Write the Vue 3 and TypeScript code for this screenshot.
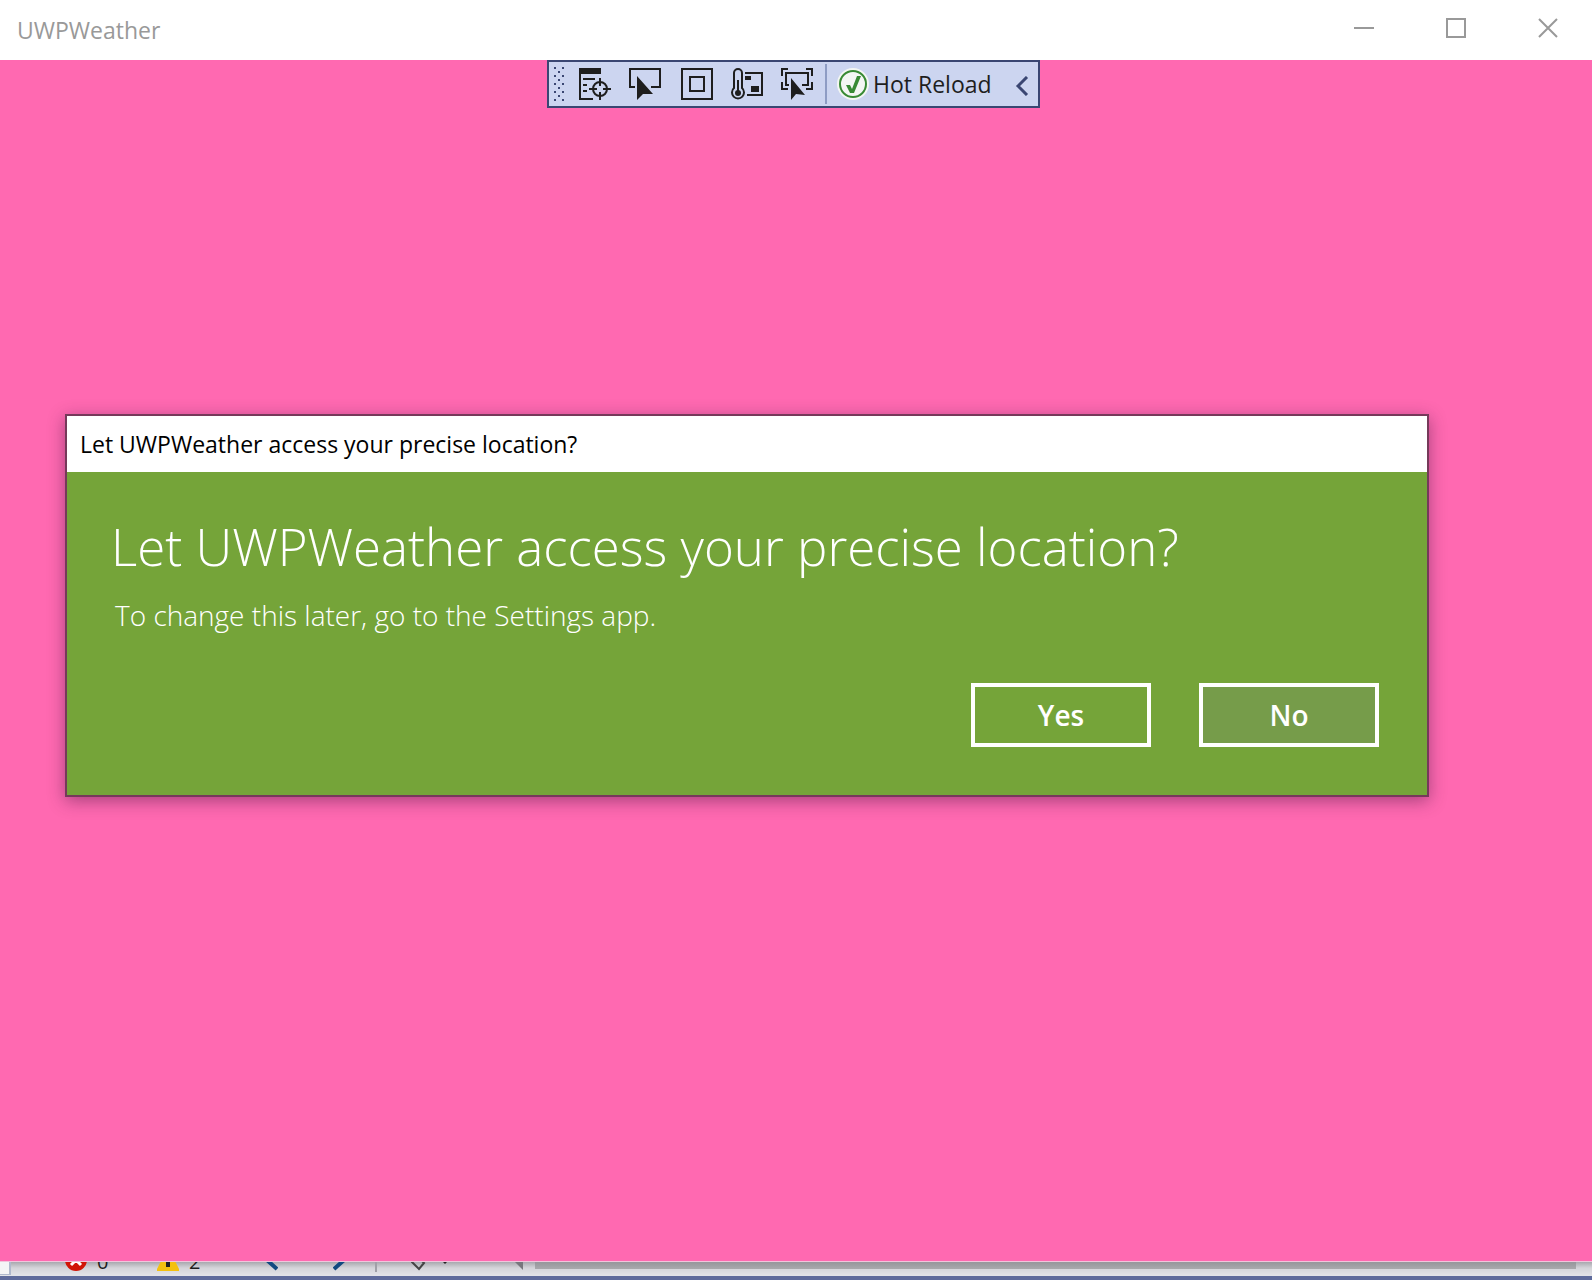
<script setup lang="ts">
import { ref } from 'vue'

const appName = 'UWPWeather'
const question = `Let ${appName} access your precise location?`
const answer = ref<'yes' | 'no' | null>(null)
const errors = 0
const warnings = 2

const gripDots: { x: number; y: number }[] = []
for (let row = 0; row < 9; row++) {
  const columns = row % 2 === 0 ? [0, 8] : [4]
  for (const x of columns) gripDots.push({ x, y: row * 4 })
}
</script>

<template>
  <div class="window">
    <header class="titlebar">
      <span class="app-name">{{ appName }}</span>
      <div class="controls">
        <button type="button" aria-label="Minimize">
          <svg width="20" height="20" viewBox="0 0 20 20"><path d="M0 10H20" /></svg>
        </button>
        <button type="button" aria-label="Maximize">
          <svg width="20" height="20" viewBox="0 0 20 20"><path d="M1 1H19V19H1Z" /></svg>
        </button>
        <button type="button" aria-label="Close">
          <svg width="20" height="20" viewBox="0 0 20 20"><path d="M1 1L19 19M19 1L1 19" /></svg>
        </button>
      </div>
    </header>

    <main class="page">
      <div class="toolbar" role="toolbar" aria-label="Debug toolbar">
        <svg class="grip" width="10" height="34" viewBox="0 0 10 34">
          <rect v-for="(dot, i) in gripDots" :key="i" :x="dot.x" :y="dot.y" width="2" height="2" />
        </svg>
        <div class="tools">
          <button type="button" aria-label="Go to live visual tree">
            <svg width="32" height="32" viewBox="0 0 32 32">
              <path class="solid" d="M0 0H22V6H0Z" />
              <path d="M1 0V31H14M4 11H16M4 17H8M4 23H8" />
              <circle cx="21" cy="21" r="7" />
              <path d="M21 10V18M21 24V32M10 21H18M24 21H32" />
            </svg>
          </button>
          <button type="button" aria-label="Select element">
            <svg width="32" height="32" viewBox="0 0 32 32">
              <path d="M6 19H1V1H31V19H22" />
              <path class="solid" d="M8 8L24 26L14 26L8 32Z" />
            </svg>
          </button>
        </div>
        <div class="tools">
          <button type="button" aria-label="Display layout adorners">
            <svg width="32" height="32" viewBox="0 0 32 32">
              <path d="M1 1H31V31H1ZM9 9H23V23H9Z" />
            </svg>
          </button>
          <button type="button" aria-label="Binding failures">
            <svg width="32" height="32" viewBox="0 0 32 32">
              <path d="M3 20V5A4 4 0 0 1 11 5V20A6 6 0 1 1 3 20Z" />
              <path d="M7 12V25" />
              <circle class="solid" cx="7" cy="25" r="3" />
              <path d="M14 5H31V27H16" />
              <path class="solid" d="M14 8H20V12H14ZM20 18H28V24H20Z" />
            </svg>
          </button>
          <button type="button" aria-label="Track focused element">
            <svg width="32" height="32" viewBox="0 0 32 32">
              <path d="M1 8V1H7M25 1H31V8M1 14V21H7M25 21H31V14" />
              <path d="M8 17H5V5H27V17H21" />
              <path class="solid" d="M10 10L24 27L15 26L10 32Z" />
            </svg>
          </button>
        </div>
        <span class="divider"></span>
        <button type="button" class="hot-reload">
          <svg width="32" height="32" viewBox="0 0 32 32">
            <circle class="halo" cx="16" cy="16" r="16" />
            <circle class="ring" cx="16" cy="16" r="13" />
            <path class="check" d="M9 17L13 17L15 21L20 8L24 8L17 25L13 25Z" />
          </svg>
          <span>Hot Reload</span>
        </button>
        <button type="button" class="collapse" aria-label="Collapse toolbar">
          <svg width="14" height="20" viewBox="0 0 14 20"><path d="M12 1L3 10L12 19" /></svg>
        </button>
      </div>

      <section class="dialog" role="dialog" aria-labelledby="dialog-heading">
        <div class="dialog-title">{{ question }}</div>
        <div class="dialog-body">
          <h1 id="dialog-heading">{{ question }}</h1>
          <p>To change this later, go to the Settings app.</p>
          <div class="actions">
            <button type="button" @click="answer = 'yes'">Yes</button>
            <button type="button" class="focused" @click="answer = 'no'">No</button>
          </div>
        </div>
      </section>
    </main>

    <footer class="behind">
      <div class="strip">
        <span class="box"></span>
        <svg class="error" width="22" height="22" viewBox="0 0 22 22">
          <circle cx="11" cy="11" r="11" fill="#d11507" />
          <path d="M6 6L16 16M16 6L6 16" stroke="#fff" stroke-width="3" />
        </svg>
        <span class="count">{{ errors }}</span>
        <svg class="warning" width="22" height="20" viewBox="0 0 22 20">
          <path d="M9 0H13L22 18V20H0V18Z" fill="#f4c010" />
          <path d="M11 4V12M11 12V16" stroke="#222" stroke-width="4" />
        </svg>
        <span class="count">{{ warnings }}</span>
        <svg class="back" width="12" height="20" viewBox="0 0 12 20">
          <path d="M11 2L2 10L11 18" fill="none" stroke="#124a80" stroke-width="4" />
        </svg>
        <svg class="forward" width="12" height="20" viewBox="0 0 12 20">
          <path d="M1 2L10 10L1 18" fill="none" stroke="#124a80" stroke-width="4" />
        </svg>
        <span class="rule"></span>
        <svg class="brush" width="36" height="20" viewBox="0 0 36 20">
          <path d="M0 9L8 17L13 11L10 8" fill="none" stroke="#444" stroke-width="2" />
          <path d="M32 7H36V10L34 12L32 10Z" fill="#222" />
        </svg>
        <svg class="scroll-arrow" width="8" height="16" viewBox="0 0 8 16">
          <path d="M8 0V16L0 8Z" fill="#77777d" />
        </svg>
        <span class="thumb"></span>
      </div>
    </footer>
  </div>
</template>

<style>
body {
  margin: 0;
}
</style>

<style scoped>
.window {
  display: flex;
  flex-direction: column;
  min-height: 100vh;
  font-family: "Open Sans", "Noto Sans", sans-serif;
}

button {
  margin: 0;
  padding: 0;
  border: 0;
  background: none;
  font: inherit;
  color: inherit;
}

svg {
  display: block;
  flex: none;
}

.titlebar {
  display: flex;
  justify-content: space-between;
  height: 60px;
  background: #fff;
}

.app-name {
  padding-left: 17px;
  font-size: 23px;
  line-height: 60px;
  color: #999;
}

.controls {
  display: flex;
  gap: 4px;
  height: 56px;
}

.controls button {
  display: grid;
  place-items: center;
  width: 88px;
}

.controls svg {
  fill: none;
  stroke: #999;
  stroke-width: 2;
}

.page {
  display: flex;
  flex: 1;
  flex-direction: column;
  padding: 0 163px 0 65px;
  background: #ff69b1;
}

.toolbar {
  box-sizing: border-box;
  display: flex;
  align-items: center;
  align-self: center;
  width: 493px;
  height: 48px;
  margin-left: 93px;
  padding-left: 5px;
  border: 2px solid #3a4672;
  background: #ccd5f0;
  color: #1e1e1e;
}

.grip {
  margin-right: 15px;
  fill: #3a4672;
}

.tools {
  display: flex;
  gap: 18px;
  margin-right: 20px;
  fill: none;
  stroke: #1e1e1e;
  stroke-width: 2;
}

.tools + .tools {
  margin-right: 12px;
}

.solid {
  fill: #1e1e1e;
  stroke: none;
}

.divider {
  width: 2px;
  height: 40px;
  background: #8e9cc4;
}

.hot-reload {
  display: flex;
  flex: 1;
  align-items: center;
  gap: 4px;
  margin-left: 10px;
  font-size: 23px;
  line-height: 32px;
  white-space: nowrap;
}

.halo {
  fill: #f3f6f3;
}

.ring {
  fill: none;
  stroke: #388a34;
  stroke-width: 2;
}

.check {
  fill: #388a34;
}

.collapse {
  padding-top: 4px;
  margin-right: 9px;
}

.collapse svg {
  fill: none;
  stroke: #3a4672;
  stroke-width: 3;
}

.dialog {
  margin-top: 306px;
  border: 2px solid #76395a;
  box-shadow: 0 4px 16px rgba(60, 20, 60, 0.45);
}

.dialog-title {
  padding-left: 13px;
  background: #fff;
  font-size: 23px;
  line-height: 56px;
  color: #000;
}

.dialog-body {
  padding: 39px 48px 48px 44px;
  background: #75a439;
  color: #fff;
}

h1 {
  margin: 0;
  font-size: 51px;
  font-weight: 300;
  line-height: 70px;
}

p {
  margin: 14px 0 47px 4px;
  font-size: 28px;
  font-weight: 300;
  line-height: 41px;
}

.actions {
  display: flex;
  justify-content: flex-end;
  gap: 48px;
}

.actions button {
  width: 180px;
  height: 64px;
  border: 4px solid #fff;
  font-size: 28px;
  font-weight: 600;
}

.actions .focused {
  background: #769c4a;
}

/* The gradient is the shadow cast by the window on the strip below it */
.behind {
  height: 14px;
  overflow: hidden;
  border-top: 1px solid #efc6dc;
  border-bottom: 4px solid #5f6b9c;
  background: linear-gradient(#a8a8ae, #d4d4d9 6px, #e4e4e9);
}

.strip {
  display: flex;
  align-items: flex-end;
  height: 14px;
}

.box {
  box-sizing: border-box;
  width: 11px;
  height: 28px;
  margin-bottom: 1px;
  border-right: 2px solid #b0b8cc;
  border-bottom: 1px solid #b0b8cc;
  background: #f4f4f6;
}

.error {
  margin: 0 10px 5px 54px;
}

.count {
  width: 12px;
  font-size: 20px;
  line-height: 28px;
  color: #1e1e1e;
}

.warning {
  margin: 0 10px 5px 48px;
}

.back {
  margin: 0 55px 5px 65px;
}

.forward {
  margin-bottom: 5px;
}

.rule {
  width: 2px;
  height: 26px;
  margin: 0 34px 4px 30px;
  background: #a0a0a8;
}

.brush {
  margin-bottom: 4px;
}

.scroll-arrow {
  margin: 0 12px 6px 68px;
}

.thumb {
  flex: 1;
  height: 16px;
  margin: 0 16px 7px 0;
  background: linear-gradient(#98989d 10px, #a9a9ad);
}
</style>
